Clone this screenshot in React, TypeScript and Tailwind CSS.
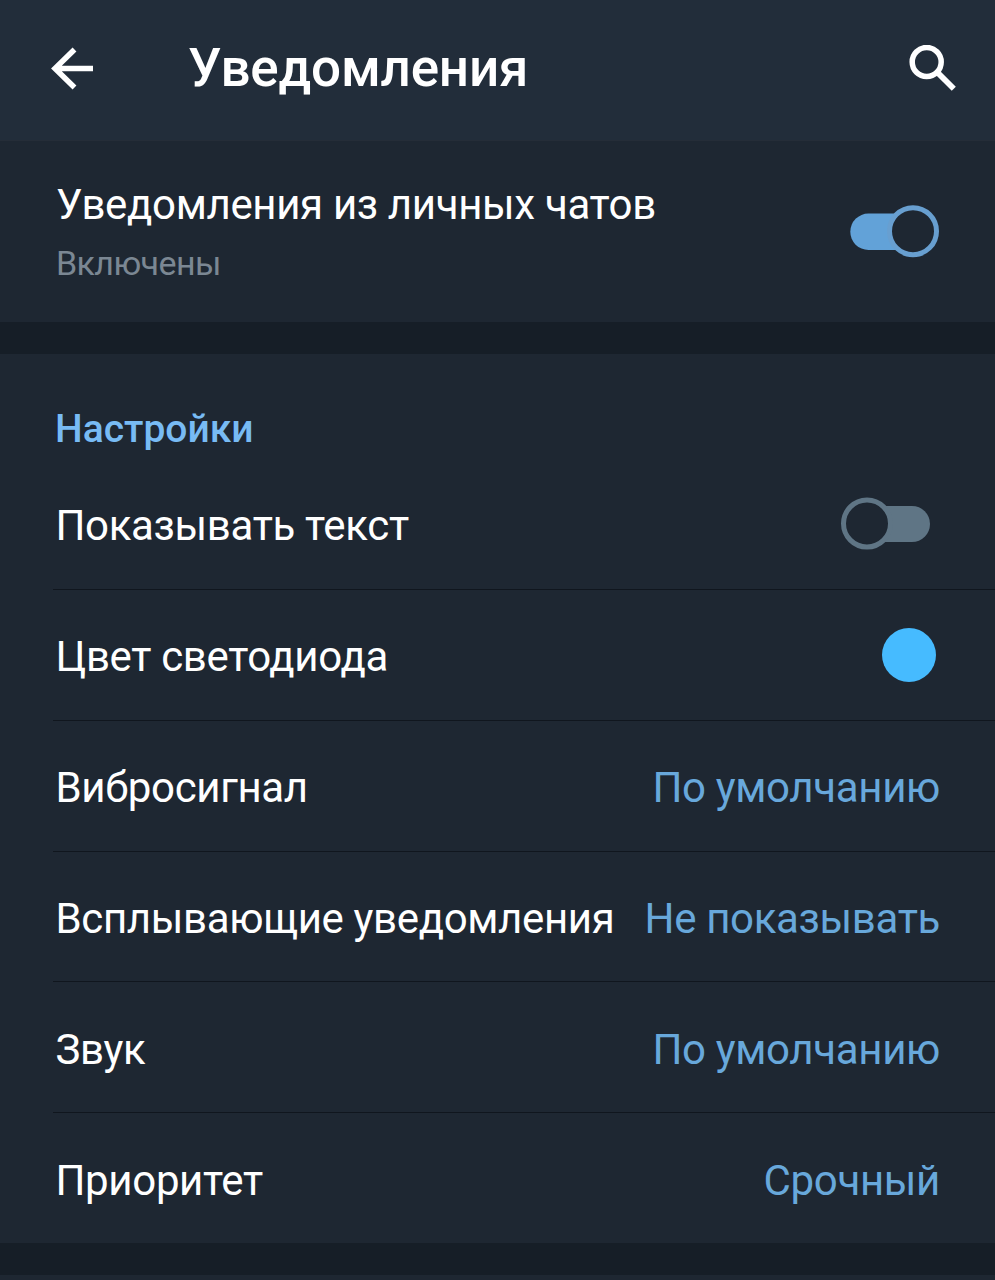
import React from 'react';

interface Setting {
  label: string;
  value?: string;
  control?: 'switch' | 'color';
}

const settings: Setting[] = [
  { label: 'Показывать текст', control: 'switch' },
  { label: 'Цвет светодиода', control: 'color' },
  { label: 'Вибросигнал', value: 'По умолчанию' },
  { label: 'Всплывающие уведомления', value: 'Не показывать' },
  { label: 'Звук', value: 'По умолчанию' },
  { label: 'Приоритет', value: 'Срочный' },
];

function Switch({ checked }: { checked?: boolean }) {
  return checked ? (
    <svg width="90" height="54" viewBox="0 0 90 54" role="switch" aria-checked="true">
      <rect x="0.3" y="8.5" width="72" height="36.5" rx="18.2" fill="#62a2d8" />
      <circle cx="63" cy="26.2" r="23.5" fill="#1e2732" stroke="#689fd0" strokeWidth="5" />
    </svg>
  ) : (
    <svg width="90" height="54" viewBox="0 0 90 54" role="switch" aria-checked="false">
      <rect x="18" y="9" width="72" height="36" rx="18" fill="#5f7585" />
      <circle cx="27" cy="26.5" r="23.5" fill="#1e2732" stroke="#5f7585" strokeWidth="5" />
    </svg>
  );
}

export default function App() {
  return (
    <div className="flex h-[1280px] w-[995px] flex-col overflow-hidden bg-[#161e27] font-['Roboto',sans-serif] text-[42px] leading-none tracking-[-0.34px] text-white">
      <header className="flex h-[141px] shrink-0 items-center border-b border-[#252d38] bg-[#222d3a] pb-[3px] pl-[50px] pr-[38px]">
        <svg width="44" height="44" viewBox="0 0 44 44" fill="none" stroke="white" strokeWidth="5.5">
          <path d="M43 21.5H5M24.5 2.5L5 21.5l19.5 19" />
        </svg>
        <h1 className="ml-[94px] text-[53px] font-medium tracking-[-0.2px]">Уведомления</h1>
        <svg className="ml-auto" width="48" height="48" viewBox="0 0 48 48" fill="none" stroke="white">
          <circle cx="17.7" cy="17" r="14.5" strokeWidth="5.5" />
          <path d="M29.5 28.5L44.8 43.8" strokeWidth="5.8" />
        </svg>
      </header>

      <section className="flex h-[181px] shrink-0 items-center justify-between bg-[#1e2732] pl-[56px] pr-[55px]">
        <div className="pt-px">
          <p>Уведомления из личных чатов</p>
          <p className="mt-[20px] text-[34px] tracking-[-0.6px] text-[#7b8793]">Включены</p>
        </div>
        <Switch checked />
      </section>

      <section className="mt-[32px] h-[889px] shrink-0 bg-[#1e2732]">
        <h2 className="flex h-[105px] items-center pl-[55px] pt-[45px] text-[39px] font-medium tracking-normal text-[#78bbf4]">
          Настройки
        </h2>
        <div className="ml-[53px]">
          {settings.map(({ label, value, control }) => (
            <div
              key={label}
              className="flex h-[130.85px] items-center justify-between border-b border-[#10161e] pl-[2.5px] pr-[55px] last:border-b-0"
            >
              <span className="pt-[5px]">{label}</span>
              {value && <span className="pt-[5px] text-[#68a8db]">{value}</span>}
              {control === 'switch' && (
                <span className="mr-[10px]">
                  <Switch />
                </span>
              )}
              {control === 'color' && <span className="mr-[4px] size-[54px] rounded-full bg-[#46bbff]" />}
            </div>
          ))}
        </div>
      </section>

      {/* Top edge of the next section */}
      <section className="mt-[32px] h-[5px] shrink-0 bg-[#1e2732]" />
    </div>
  );
}
